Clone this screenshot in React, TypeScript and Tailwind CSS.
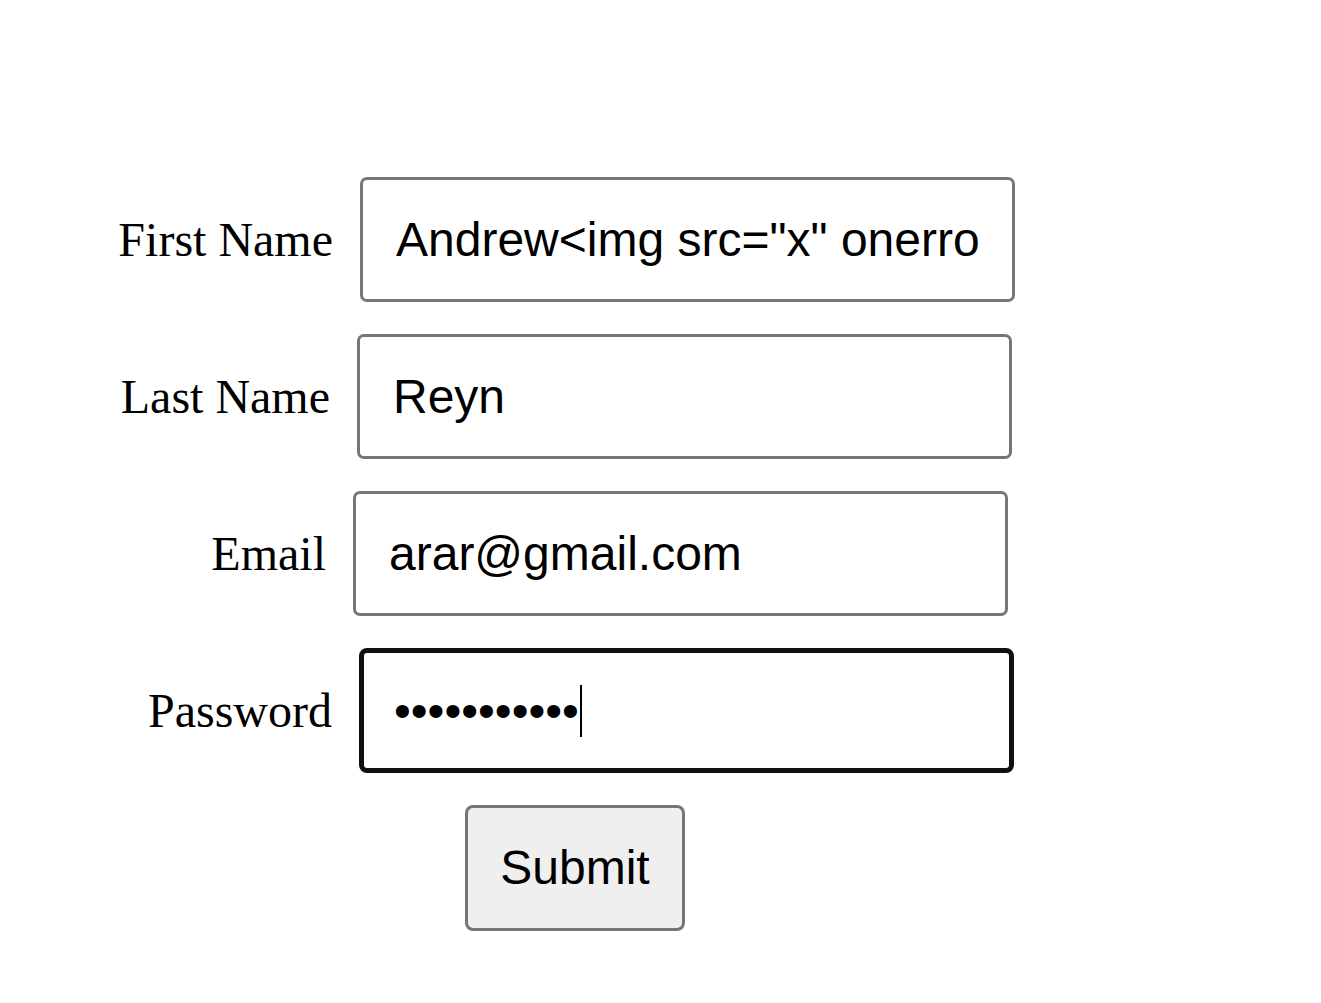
import React from 'react'

const labelCls = "mr-[27px] text-[48px] leading-none text-black [font-family:'Liberation_Serif',serif]"
const fieldCls =
  "h-[125px] w-[655px] rounded-[7px] border-[3px] border-[#767676] bg-white pl-[33px] pr-[33px] text-[48px] text-black outline-none [font-family:'Liberation_Sans',Arial,sans-serif]"

export default function App() {
  return (
    <div className="min-h-screen bg-white pt-[177px]">
      <form className="flex flex-col gap-[32px]" onSubmit={(e) => e.preventDefault()}>
        {/* First name */}
        <div className="flex w-[1015px] items-center justify-end">
          <label className={labelCls}>First Name</label>
          <input className={fieldCls} readOnly value={'Andrew<img src="x" onerror="alert(1)">'} />
        </div>

        {/* Last name */}
        <div className="flex w-[1015px] items-center justify-end pr-[3px]">
          <label className={labelCls}>Last Name</label>
          <input className={fieldCls} readOnly value="Reyn" />
        </div>

        {/* Email */}
        <div className="flex w-[1015px] items-center justify-end pr-[7px]">
          <label className={labelCls}>Email</label>
          <input className={fieldCls} readOnly value="arar@gmail.com" />
        </div>

        {/* Password, shown focused with the caret */}
        <div className="flex w-[1015px] items-center justify-end pr-[1px]">
          <label className={labelCls}>Password</label>
          <div className="flex h-[125px] w-[655px] items-center rounded-[8px] border-[5px] border-[#101010] bg-white pl-[30px]">
            <span className="text-[48px] leading-none text-black [font-family:'Liberation_Sans',Arial,sans-serif]">
              •••••••••••
            </span>
            <span className="ml-[1px] h-[52px] w-[2px] bg-black" />
          </div>
        </div>

        {/* Submit */}
        <div className="pl-[465px]">
          <button
            type="submit"
            className="h-[126px] w-[220px] rounded-[8px] border-[3px] border-[#767676] bg-[#efefef] text-[48px] text-black [font-family:'Liberation_Sans',Arial,sans-serif]"
          >
            Submit
          </button>
        </div>
      </form>
    </div>
  )
}
